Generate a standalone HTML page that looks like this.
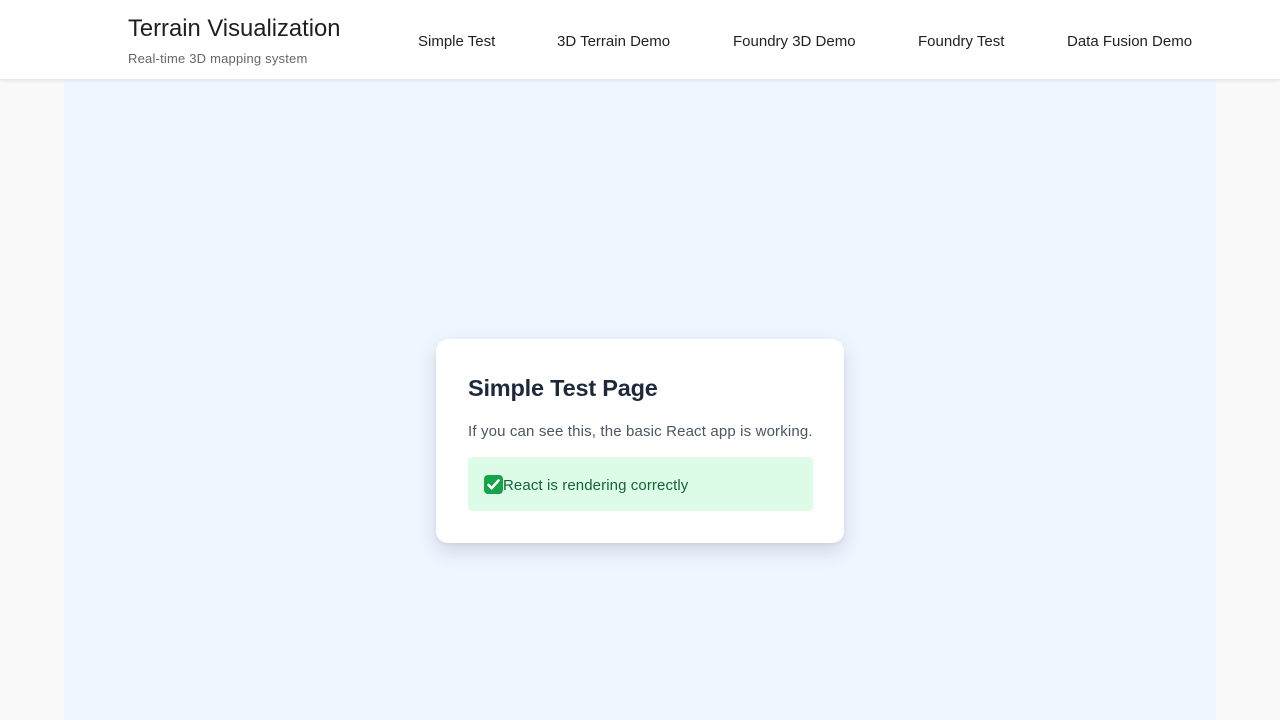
<!DOCTYPE html>
<html><head><meta charset="utf-8"><style>
*{margin:0;padding:0;box-sizing:border-box}
body{width:1280px;height:720px;overflow:hidden;background:#f9f9f9;font-family:"Liberation Sans",sans-serif;position:relative}
.hdr{position:absolute;left:0;top:0;width:1280px;height:80px;background:#fff;border-bottom:1px solid #e5e7eb;box-shadow:0 1px 3px rgba(0,0,0,.08);z-index:2}
.t{position:absolute;left:128px;top:15px;font-size:23.8px;color:#1f1f1f;white-space:nowrap}
.s{position:absolute;left:128px;top:51px;font-size:13px;color:#666;white-space:nowrap;letter-spacing:.2px}
.n{position:absolute;top:33px;font-size:15px;color:#222;white-space:nowrap}
.main{position:absolute;left:64px;top:80px;width:1152px;height:640px;background:#eff6ff}
.card{position:absolute;left:436px;top:339px;width:408px;height:204px;background:#fff;border-radius:12px;box-shadow:0 8px 20px rgba(30,41,80,.15),0 2px 4px rgba(0,0,0,.05)}
.h{position:absolute;left:32px;top:36px;font-size:23.5px;font-weight:bold;color:#1e293b;white-space:nowrap;letter-spacing:-.2px}
.p{position:absolute;left:32px;top:84px;font-size:15px;color:#4b5563;white-space:nowrap;letter-spacing:.15px}
.g{position:absolute;left:32px;top:118px;width:345px;height:54px;background:#dcfce7;border-radius:4px}
.gt{position:absolute;left:35px;top:20px;font-size:15px;color:#166534;white-space:nowrap;letter-spacing:.1px}
.ck{position:absolute;left:16px;top:18px;width:19px;height:19px;background:#16a34a;border-radius:4px}
</style></head><body>
<div class="hdr">
<div class="t">Terrain Visualization</div>
<div class="s">Real-time 3D mapping system</div>
<div class="n" style="left:418px">Simple Test</div>
<div class="n" style="left:557px">3D Terrain Demo</div>
<div class="n" style="left:733px">Foundry 3D Demo</div>
<div class="n" style="left:918px">Foundry Test</div>
<div class="n" style="left:1067px">Data Fusion Demo</div>
</div>
<div class="main"></div>
<div class="card">
<div class="h">Simple Test Page</div>
<div class="p">If you can see this, the basic React app is working.</div>
<div class="g"><div class="ck"><svg width="19" height="19" viewBox="0 0 19 19"><path d="M4.5 10l3.2 3.2L14.5 5.5" stroke="#fff" stroke-width="2.6" fill="none" stroke-linecap="round" stroke-linejoin="round"/></svg></div><div class="gt">React is rendering correctly</div></div>
</div>
</body></html>
